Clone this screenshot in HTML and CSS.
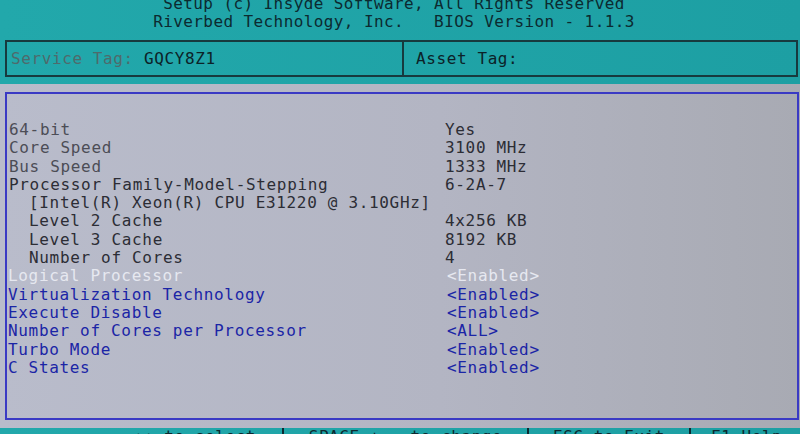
FILE: index.html
```html
<!DOCTYPE html>
<html>
<head>
<meta charset="utf-8">
<link rel="stylesheet" href="styles.css">
</head>
<body>
<div class="screen">
  <header class="title">
    <div class="title-line">Setup (c) Insyde Software, All Rights Reserved</div>
    <div class="title-line">Riverbed Technology, Inc.   BIOS Version - 1.1.3</div>
  </header>
  <div class="tags">
    <div class="tag tag-service"><span class="tag-label">Service Tag:</span> <span class="tag-value">GQCY8Z1</span></div>
    <div class="tag tag-asset">Asset Tag:</div>
  </div>
  <div class="panel">
    <div class="frame">
      <div class="row info dim"><span class="label">64-bit</span><span class="value">Yes</span></div>
      <div class="row info dim"><span class="label">Core Speed</span><span class="value">3100 MHz</span></div>
      <div class="row info dim"><span class="label">Bus Speed</span><span class="value">1333 MHz</span></div>
      <div class="row info"><span class="label">Processor Family-Model-Stepping</span><span class="value">6-2A-7</span></div>
      <div class="row info sub"><span class="label wide">[Intel(R) Xeon(R) CPU E31220 @ 3.10GHz]</span></div>
      <div class="row info sub"><span class="label">Level 2 Cache</span><span class="value">4x256 KB</span></div>
      <div class="row info sub"><span class="label">Level 3 Cache</span><span class="value">8192 KB</span></div>
      <div class="row info sub"><span class="label">Number of Cores</span><span class="value">4</span></div>
      <div class="row item selected"><span class="label">Logical Processor</span><span class="value">&lt;Enabled&gt;</span></div>
      <div class="row item"><span class="label">Virtualization Technology</span><span class="value">&lt;Enabled&gt;</span></div>
      <div class="row item"><span class="label">Execute Disable</span><span class="value">&lt;Enabled&gt;</span></div>
      <div class="row item"><span class="label">Number of Cores per Processor</span><span class="value">&lt;ALL&gt;</span></div>
      <div class="row item"><span class="label">Turbo Mode</span><span class="value">&lt;Enabled&gt;</span></div>
      <div class="row item"><span class="label">C States</span><span class="value">&lt;Enabled&gt;</span></div>
    </div>
  </div>
  <footer class="keys">
    <div class="key key-move">↑↓ to select</div>
    <div class="key key-change">SPACE,+,- to change</div>
    <div class="key key-exit">ESC to Exit</div>
    <div class="key key-help">F1-Help</div>
  </footer>
</div>
</body>
</html>
```
FILE: styles.css
```css
html, body {
  margin: 0;
  padding: 0;
  background: #1ea3a6;
}
body {
  width: 800px;
  height: 434px;
  overflow: hidden;
  font-family: "DejaVu Sans Mono", "Liberation Mono", monospace;
  font-size: 16px;
}
.screen {
  width: 800px;
  height: 434px;
  overflow: hidden;
  display: flex;
  flex-direction: column;
  background: linear-gradient(to right, #22a8ab, #1d9fa3);
}
.title {
  margin-top: -5px;
  padding-right: 12px;
  color: #0c2a30;
  letter-spacing: 0.4px;
  line-height: 18px;
  text-align: center;
  flex-shrink: 0;
}
.title-line {
  white-space: pre;
}
.tags {
  margin: 9px 2px 0 5px;
  height: 33px;
  border: 2px solid #173a3e;
  display: flex;
  line-height: 33px;
  letter-spacing: 0.6px;
  flex-shrink: 0;
}
.tag-service {
  width: 391px;
  padding-left: 4px;
}
.tag-asset {
  flex: 1;
  border-left: 2px solid #173a3e;
  padding-left: 12px;
  color: #0c2228;
}
.tag-label {
  color: #4f6a6c;
}
.tag-value {
  color: #0c2228;
}
.panel {
  margin-top: 7px;
  height: 344px;
  flex-shrink: 0;
  background: linear-gradient(to right, #b9bccb 0%, #b3b5c3 55%, #a8aab3 100%);
  display: flex;
  flex-direction: column;
}
.frame {
  margin: 8px 1px 0 5px;
  height: 297px;
  border: 2px solid #3a3ac4;
  padding: 27px 0 0 1px;
  letter-spacing: 0.67px;
  line-height: 18.3px;
}
.row {
  display: grid;
  grid-template-columns: 436px 1fr;
  white-space: pre;
}
.row .wide {
  grid-column: 1 / 3;
}
.info {
  color: #2c2d35;
  padding-left: 1px;
}
.info.dim .label {
  color: #4c4d56;
}
.sub .label {
  padding-left: 20px;
}
.item {
  color: #1b25a6;
}
.item .value {
  padding-left: 3px;
}
.selected {
  color: #e6e8f0;
}
.keys {
  height: 18px;
  flex-shrink: 0;
  display: flex;
  line-height: 18px;
  color: #0c2a30;
  letter-spacing: 0.55px;
}
.key {
  text-align: center;
  white-space: pre;
  box-sizing: border-box;
}
.key-move {
  width: 282px;
  text-align: right;
  padding-right: 26px;
}
.key-change {
  width: 245px;
  border-left: 2px solid #0c2a30;
}
.key-exit {
  width: 162px;
  border-left: 2px solid #0c2a30;
}
.key-help {
  flex: 1;
  border-left: 2px solid #0c2a30;
  text-align: left;
  padding-left: 20px;
}
```
